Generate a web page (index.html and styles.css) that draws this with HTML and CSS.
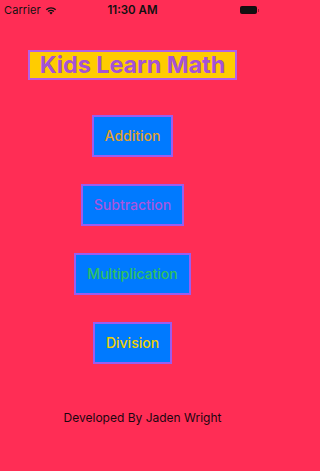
FILE: index.html
```html
<!DOCTYPE html>
<html>
<head>
<meta charset="utf-8">
<link rel="stylesheet" href="styles.css">
</head>
<body>
<div class="screen">
  <div class="status">
    <div class="carrier">Carrier
      <svg class="wifi" width="12" height="9" viewBox="0 0 12 9"><path d="M6 8.6 L4.3 6.8 A2.5 2.5 0 0 1 7.7 6.8 Z" fill="#111"/><path d="M2.6 5.1 A4.9 4.9 0 0 1 9.4 5.1 L8.4 6.1 A3.5 3.5 0 0 0 3.6 6.1 Z" fill="#111"/><path d="M0.8 3.3 A7.4 7.4 0 0 1 11.2 3.3 L10.2 4.3 A6 6 0 0 0 1.8 4.3 Z" fill="#111"/></svg>
    </div>
    <div class="time">11:30 AM</div>
    <div class="battery"><span class="batt-body"></span><span class="batt-tip"></span></div>
  </div>
  <div class="title">Kids Learn Math</div>
  <div class="buttons">
    <div class="btn add">Addition</div>
    <div class="btn sub">Subtraction</div>
    <div class="btn mul">Multiplication</div>
    <div class="btn div">Division</div>
  </div>
  <div class="footer">Developed By Jaden Wright</div>
</div>
</body>
</html>
```
FILE: styles.css
```css
html, body {
  margin: 0;
  padding: 0;
}
body {
  background: #ff2d55;
  font-family: Inter, "Noto Sans", sans-serif;
}
.screen {
  width: 265px;
  height: 471px;
  display: flex;
  flex-direction: column;
  align-items: center;
}
.status {
  width: 100%;
  height: 20px;
  display: flex;
  align-items: center;
  justify-content: space-between;
  padding: 0 6px 0 4px;
  box-sizing: border-box;
  color: #111;
  position: relative;
}
.carrier {
  font-size: 11px;
  display: flex;
  align-items: center;
  gap: 4px;
  letter-spacing: 0.1px;
}
.time {
  position: absolute;
  left: 0;
  right: 0;
  text-align: center;
  font-size: 11.5px;
  font-weight: 600;
}
.battery {
  display: flex;
  align-items: center;
}
.batt-body {
  width: 15px;
  height: 6px;
  background: #111;
  border: 1px solid rgba(40,0,10,0.45);
  border-radius: 2px;
}
.batt-tip {
  width: 1.5px;
  height: 3px;
  background: rgba(40,0,10,0.45);
  margin-left: 1px;
}
.title {
  margin-top: 30px;
  background: #ffcc00;
  border: 2px solid #b261e6;
  color: #a552d6;
  font-weight: 700;
  font-size: 23.5px;
  line-height: 26px;
  padding: 0 10px;
  letter-spacing: -0.1px;
}
.buttons {
  margin-top: 35px;
  display: flex;
  flex-direction: column;
  align-items: center;
  gap: 27px;
}
.btn {
  background: #007aff;
  border: 2px solid #9b5cf0;
  padding: 0 11px;
  height: 38px;
  line-height: 38px;
  font-size: 14px;
  font-weight: 500;
}
.add { color: #e5a02a; }
.sub { color: #a855e0; }
.mul { color: #2fc060; }
.div { color: #f0d000; }
.footer {
  margin-top: 46px;
  padding-left: 20px;
  font-size: 12px;
  color: #1a0610;
}
```
